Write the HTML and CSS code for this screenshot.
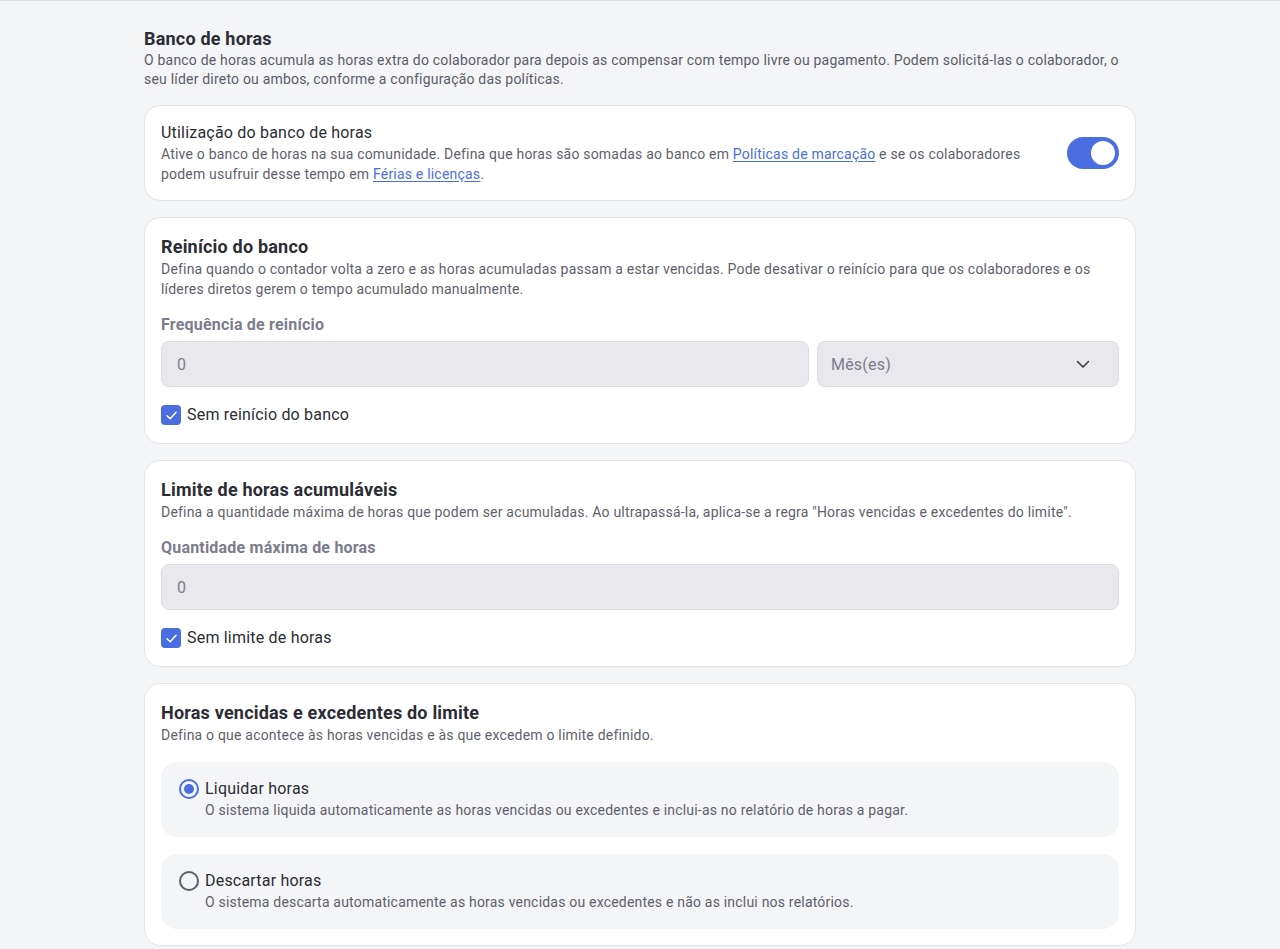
FILE: index.html
```html
<!DOCTYPE html>
<html lang="pt">
<head>
<meta charset="utf-8">
<title>Banco de horas</title>
<link rel="stylesheet" href="styles.css">
</head>
<body>
<main class="page">
  <header class="intro">
    <h1 class="page-title">Banco de horas</h1>
    <p class="page-desc">O banco de horas acumula as horas extra do colaborador para depois as compensar com tempo livre ou pagamento. Podem solicitá-las o colaborador, o seu líder direto ou ambos, conforme a configuração das políticas.</p>
  </header>

  <section class="card card-row">
    <div class="card-text">
      <h2 class="row-title">Utilização do banco de horas</h2>
      <p class="card-desc">Ative o banco de horas na sua comunidade. Defina que horas são somadas ao banco em <a href="#" class="link">Políticas de marcação</a> e se os colaboradores podem usufruir desse tempo em <a href="#" class="link">Férias e licenças</a>.</p>
    </div>
    <span class="toggle"><span class="knob"></span></span>
  </section>

  <section class="card">
    <h2 class="card-title">Reinício do banco</h2>
    <p class="card-desc">Defina quando o contador volta a zero e as horas acumuladas passam a estar vencidas. Pode desativar o reinício para que os colaboradores e os líderes diretos gerem o tempo acumulado manualmente.</p>
    <div class="field-label">Frequência de reinício</div>
    <div class="field-row">
      <div class="input grow">0</div>
      <div class="input select">
        <span>Mês(es)</span>
        <svg class="chev" width="16" height="16" viewBox="0 0 16 16"><path d="M2.5 5.5 L8 11 L13.5 5.5" fill="none" stroke="#3a3a44" stroke-width="1.6" stroke-linecap="round" stroke-linejoin="round"/></svg>
      </div>
    </div>
    <label class="check-row">
      <span class="checkbox"><svg width="13" height="13" viewBox="0 0 12 12"><path d="M1.8 6.2 L4.8 9 L10.2 3" fill="none" stroke="#fff" stroke-width="1.4" stroke-linecap="round" stroke-linejoin="round"/></svg></span>
      <span>Sem reinício do banco</span>
    </label>
  </section>

  <section class="card">
    <h2 class="card-title">Limite de horas acumuláveis</h2>
    <p class="card-desc">Defina a quantidade máxima de horas que podem ser acumuladas. Ao ultrapassá-la, aplica-se a regra "Horas vencidas e excedentes do limite".</p>
    <div class="field-label">Quantidade máxima de horas</div>
    <div class="field-row">
      <div class="input grow">0</div>
    </div>
    <label class="check-row">
      <span class="checkbox"><svg width="13" height="13" viewBox="0 0 12 12"><path d="M1.8 6.2 L4.8 9 L10.2 3" fill="none" stroke="#fff" stroke-width="1.4" stroke-linecap="round" stroke-linejoin="round"/></svg></span>
      <span>Sem limite de horas</span>
    </label>
  </section>

  <section class="card last">
    <h2 class="card-title">Horas vencidas e excedentes do limite</h2>
    <p class="card-desc">Defina o que acontece às horas vencidas e às que excedem o limite definido.</p>
    <div class="options">
      <div class="option">
        <span class="radio checked"><span class="dot"></span></span>
        <div class="option-text">
          <div class="option-title">Liquidar horas</div>
          <div class="option-desc">O sistema liquida automaticamente as horas vencidas ou excedentes e inclui-as no relatório de horas a pagar.</div>
        </div>
      </div>
      <div class="option">
        <span class="radio"></span>
        <div class="option-text">
          <div class="option-title">Descartar horas</div>
          <div class="option-desc">O sistema descarta automaticamente as horas vencidas ou excedentes e não as inclui nos relatórios.</div>
        </div>
      </div>
    </div>
  </section>
</main>
</body>
</html>
```

FILE: styles.css
```css
* { box-sizing: border-box; }
html, body { margin: 0; padding: 0; }
body {
  background: #f4f5f7;
  font-family: Roboto, "Liberation Sans", Arial, sans-serif;
  color: #2c2c34;
  letter-spacing: 0.2px;
  border-top: 1px solid #dfe0e5;
  height: 949px;
  overflow: hidden;
}
.page {
  width: 992px;
  margin: 0 0 0 144px;
  padding-top: 26px;
  display: flex;
  flex-direction: column;
  gap: 16px;
}
.page-title {
  margin: 0;
  font-size: 18px;
  line-height: 24px;
  font-weight: 700;
  color: #2c2c34;
}
.page-desc {
  margin: 0;
  font-size: 14px;
  line-height: 19px;
  color: #5b5b68;
}
.card {
  background: #fff;
  border: 1px solid #e2e3e8;
  border-radius: 16px;
  padding: 17px 16px 17px;
  display: flex;
  flex-direction: column;
}
.card.last { padding-bottom: 16px; }
.card-row {
  flex-direction: row;
  align-items: center;
  gap: 40px;
  padding: 16px;
}
.card-text { flex: 1; }
.row-title {
  margin: 0;
  font-size: 16px;
  line-height: 22px;
  font-weight: 400;
  color: #2c2c34;
}
.card-title {
  margin: 0;
  font-size: 18px;
  line-height: 24px;
  font-weight: 700;
  color: #2c2c34;
}
.card-desc {
  margin: 0;
  font-size: 14px;
  line-height: 20px;
  color: #5f5f6c;
}
.link { color: #4a6ee0; text-decoration: underline; text-underline-offset: 2px; }
.toggle {
  width: 52px;
  height: 32px;
  border-radius: 16px;
  background: #4a6ee0;
  display: flex;
  align-items: center;
  justify-content: flex-end;
  padding: 4px;
  flex: none;
}
.knob {
  width: 24px;
  height: 24px;
  border-radius: 50%;
  background: #fff;
}
.field-label {
  margin-top: 15px;
  font-size: 16px;
  line-height: 22px;
  font-weight: 700;
  color: #7c7c8c;
}
.field-row {
  margin-top: 5px;
  display: flex;
  gap: 8px;
}
.input {
  height: 46px;
  border: 1px solid #dcdde3;
  background: #e8e8ed;
  border-radius: 8px;
  padding: 0 15px;
  display: flex;
  align-items: center;
  font-size: 16px;
  color: #7c7c8a;
}
.grow { flex: 1; }
.select {
  width: 302px;
  padding: 0 27px 0 13px;
  justify-content: space-between;
}
.check-row {
  margin-top: 17px;
  display: flex;
  align-items: center;
  gap: 6px;
  font-size: 16px;
  line-height: 22px;
  color: #2c2c34;
}
.checkbox {
  width: 20px;
  height: 20px;
  border-radius: 4px;
  background: #4a6ee0;
  display: flex;
  align-items: center;
  justify-content: center;
}
.options {
  margin-top: 17px;
  display: flex;
  flex-direction: column;
  gap: 17px;
}
.option {
  background: #f4f5f7;
  border-radius: 16px;
  padding: 16px 16px 17px 18px;
  display: flex;
  gap: 6px;
  align-items: flex-start;
}
.radio {
  width: 20px;
  height: 20px;
  border-radius: 50%;
  border: 2px solid #5f5f6c;
  margin-top: 1px;
  display: flex;
  align-items: center;
  justify-content: center;
  flex: none;
}
.radio.checked { border-color: #4a6ee0; }
.dot { width: 10px; height: 10px; border-radius: 50%; background: #4a6ee0; }
.option-title {
  font-size: 16px;
  line-height: 22px;
  color: #2c2c34;
}
.option-desc {
  font-size: 14px;
  line-height: 20px;
  color: #5f5f6c;
}
```
